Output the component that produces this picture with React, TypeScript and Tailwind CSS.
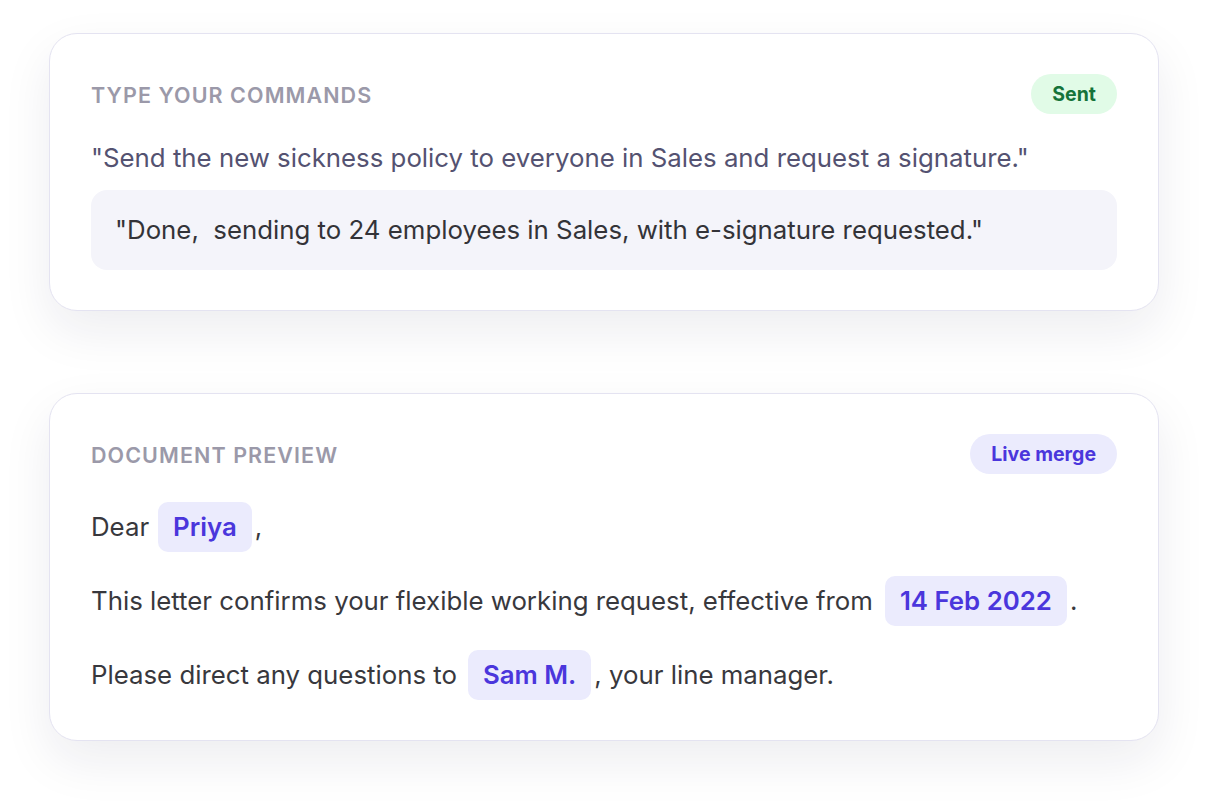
import React from "react";

function Chip({ children }: { children: React.ReactNode }) {
  return (
    <span className="inline-flex h-[50px] items-center rounded-[10px] bg-[#ebebfd] px-[15px] font-semibold text-[#4a36dc]">
      {children}
    </span>
  );
}

export default function App() {
  return (
    <div
      className="min-h-[806px] w-[1208px] bg-white px-[49px] pt-[33px]"
      style={{ fontFamily: "Inter, 'Noto Sans', sans-serif" }}
    >
      <div className="flex flex-col gap-[82px]">
        <div className="rounded-[28px] border border-[#e4e3f1] bg-white px-[41px] pb-[40px] pt-[40px] shadow-[0_20px_50px_rgba(30,30,60,0.08)]">
          <div className="flex h-[40px] items-center justify-between">
            <div className="pt-[2px] text-[21.5px] font-semibold uppercase tracking-[0.05em] text-[#9b99a9]">
              Type your commands
            </div>
            <div className="flex h-[40px] items-center rounded-full bg-[#e1fbe7] px-[21px] pt-[2px] text-[19.5px] font-bold text-[#15733a]">
              Sent
            </div>
          </div>
          <div className="mt-[28px] text-[25.8px] leading-[32px] text-[#545271]">
            "Send the new sickness policy to everyone in Sales and request a signature."
          </div>
          <div className="mt-[16px] flex h-[80px] items-center rounded-[16px] bg-[#f4f4fa] px-[24px] text-[25.8px] text-[#333338]">
            "Done,&nbsp; sending to 24 employees in Sales, with e-signature requested."
          </div>
        </div>

        <div className="rounded-[28px] border border-[#e4e3f1] bg-white px-[41px] pb-[40px] pt-[40px] shadow-[0_20px_50px_rgba(30,30,60,0.08)]">
          <div className="flex h-[40px] items-center justify-between">
            <div className="pt-[2px] text-[21.5px] font-semibold uppercase tracking-[0.05em] text-[#9b99a9]">
              Document preview
            </div>
            <div className="flex h-[40px] items-center rounded-full bg-[#ebebfd] px-[21px] pt-[2px] text-[19.5px] font-bold text-[#4a36dc]">
              Live merge
            </div>
          </div>
          <div className="mt-[28px] flex flex-col gap-[24px] text-[25.8px] text-[#38383d]">
            <div className="flex items-center">
              <span>Dear</span>
              <span className="ml-[9px]">
                <Chip>Priya</Chip>
              </span>
              <span className="ml-[3px]">,</span>
            </div>
            <div className="flex items-center">
              <span>This letter confirms your flexible working request, effective from</span>
              <span className="ml-[12px]">
                <Chip>14 Feb 2022</Chip>
              </span>
              <span className="ml-[3px]">.</span>
            </div>
            <div className="flex items-center">
              <span>Please direct any questions to</span>
              <span className="ml-[11px]">
                <Chip>Sam M.</Chip>
              </span>
              <span className="ml-[3px]">, your line manager.</span>
            </div>
          </div>
        </div>
      </div>
    </div>
  );
}
